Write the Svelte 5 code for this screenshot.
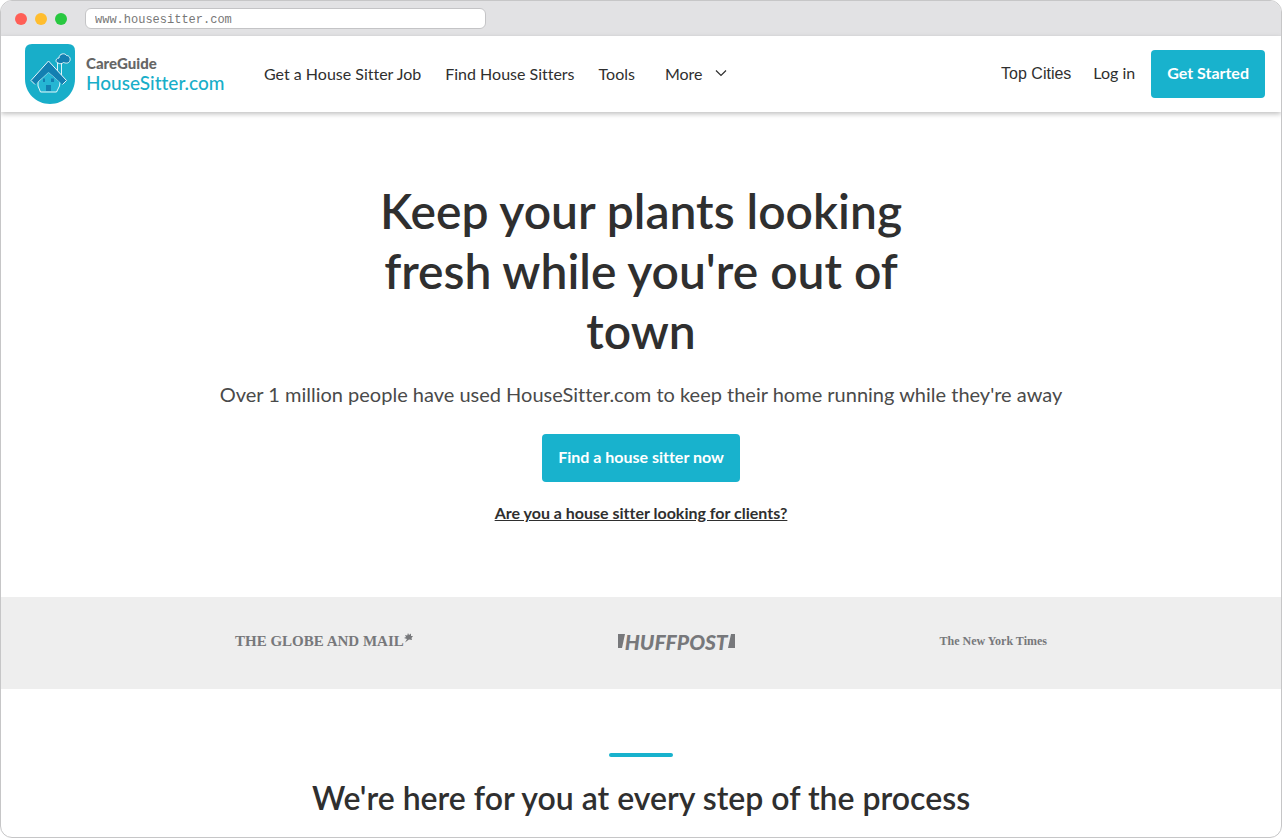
<script>
  const navLinks = ['Get a House Sitter Job', 'Find House Sitters', 'Tools'];

  let address = 'www.housesitter.com';
</script>

<div class="window">
  <div class="chrome">
    <span class="dot red"></span>
    <span class="dot yellow"></span>
    <span class="dot green"></span>
    <input class="address" type="text" aria-label="Address" bind:value={address} />
  </div>

  <header>
    <a class="brand" href="/">
      <svg width="50" height="60" viewBox="0 0 50 60" aria-hidden="true">
        <path d="M7 0H43Q50 0 50 7V35C50 49 39 60 25 60S0 49 0 35V7Q0 0 7 0Z" fill="#18aec9" />
        <path d="M32.5 18V27M36.5 18V31" stroke="#d9f3f8" stroke-width="1" />
        <path d="M33 19C30 18.5 30.5 14 34 14C34 9.500 40 8.5 41.5 11.5C45 11.5 46 15.5 44.5 17.5C43 20 40 19 38.5 18.5C37 20 34.5 20 33 19Z" fill="#137fb1" stroke="#e4f6fa" stroke-width="1" />
        <path d="M13 38L23.5 28L35 38L34.5 42L31.5 48H15.5L13 42Z" fill="#25b5d3" stroke="#e4f6fa" stroke-width="1" stroke-linejoin="round" />
        <path d="M23.5 17L41.5 36.5L37.5 40.5L23.5 28L10 40.5L6 36.5Z" fill="#137fb1" />
        <path d="M10 40.5L6 36.5L23.5 17L41.5 36.5L37.5 40.5" fill="none" stroke="#e4f6fa" stroke-width="1" stroke-linejoin="round" />
        <path d="M21 41H26V47H21Z" fill="#137fb1" />
        <path d="M18 34.5H20V38H18ZM26 34.5H29V38H26Z" fill="#137fb1" />
      </svg>
      <span class="brand-text">
        <span class="parent">CareGuide</span>
        <span class="site">HouseSitter.com</span>
      </span>
    </a>

    <nav>
      {#each navLinks as link}
        <a href="/">{link}</a>
      {/each}
      <button class="more" type="button">
        More
        <svg width="12" height="8" viewBox="0 0 12 8" aria-hidden="true">
          <path d="M1 1.5L6 6.5L11 1.5" fill="none" stroke="#2f2f2f" stroke-width="1.2" />
        </svg>
      </button>
    </nav>

    <div class="account">
      <a class="cities" href="/">Top Cities</a>
      <a class="login" href="/">Log in</a>
      <a class="button" href="/">Get Started</a>
    </div>
  </header>

  <main>
    <section class="hero">
      <h1>Keep your plants looking fresh while you're out of town</h1>
      <p>Over 1 million people have used HouseSitter.com to keep their home running while they're away</p>
      <a class="button" href="/">Find a house sitter now</a>
      <a class="clients" href="/">Are you a house sitter looking for clients?</a>
    </section>

    <section class="press">
      <div class="globe">
        THE GLOBE AND MAIL
        <svg width="9" height="10" viewBox="0 0 9 10" aria-hidden="true">
          <path d="M4 0L5 2L7 0.5L7 3L9 3L7.5 5L8 7L5 6.5L1 9.5L3 6L0 5L2 4L1 2L3.2 2.6Z" fill="#77787b" />
        </svg>
      </div>
      <div class="huff">
        <svg width="7" height="14" viewBox="0 0 7 14" aria-hidden="true">
          <path d="M0 0H7L4 14H0Z" fill="#77787b" />
        </svg>
        HUFFPOST
        <svg width="7" height="14" viewBox="0 0 7 14" aria-hidden="true">
          <path d="M3 0H7V14H0Z" fill="#77787b" />
        </svg>
      </div>
      <div class="times">The New York Times</div>
    </section>

    <section class="steps">
      <div class="rule"></div>
      <h2>We're here for you at every step of the process</h2>
    </section>
  </main>
</div>

<style>
  :global(body) {
    background: #fff;
  }

  .window {
    box-sizing: border-box;
    min-height: 100vh;
    border: 1px solid #c6c6c7;
    border-radius: 12px;
    overflow: hidden;
    background: #fff;
    color: #2f2f2f;
    font-family: Lato, 'Liberation Sans', sans-serif;
    font-variant-ligatures: none;
  }

  a {
    color: inherit;
    text-decoration: none;
  }

  .chrome {
    display: flex;
    align-items: center;
    gap: 8px;
    height: 35px;
    padding-left: 14px;
    background: #e2e2e4;
  }

  .dot {
    width: 12px;
    height: 12px;
    border-radius: 50%;
  }

  .red { background: #ff5f57; }
  .yellow { background: #ffbd2e; }
  .green { background: #28c840; }

  .address {
    box-sizing: border-box;
    width: 401px;
    height: 21px;
    margin-left: 10px;
    padding: 2px 9px 0;
    border: 1px solid #c4c4c6;
    border-radius: 6px;
    background: #fff;
    color: #777;
    font: 12px 'Liberation Mono', monospace;
  }

  header {
    display: flex;
    align-items: center;
    height: 76px;
    padding: 0 16px 0 24px;
    box-shadow: 0 2px 5px rgba(0, 0, 0, 0.25);
  }

  .brand {
    display: flex;
    align-items: center;
    gap: 11px;
    width: 239px;
  }

  .brand-text {
    display: flex;
    flex-direction: column;
  }

  .parent {
    color: #666;
    font-size: 15px;
    font-weight: 900;
    line-height: 18px;
  }

  .site {
    color: #18aec9;
    font-size: 19px;
    font-weight: 500;
    line-height: 22px;
  }

  nav {
    display: flex;
    gap: 24px;
    padding-bottom: 2px;
    font-size: 16px;
  }

  .more {
    display: flex;
    align-items: center;
    gap: 12px;
    padding: 0 0 0 6px;
    border: 0;
    background: none;
    color: inherit;
    font: inherit;
    cursor: pointer;
  }

  .account {
    display: flex;
    align-items: baseline;
    margin-left: auto;
    font-size: 16px;
  }

  .cities {
    margin-right: 22px;
    font-family: 'Liberation Sans', Arial, sans-serif;
  }

  .login {
    margin-right: 16px;
  }

  .button {
    box-sizing: border-box;
    height: 48px;
    padding: 0 16px;
    border-radius: 4px;
    background: #18b2cd;
    color: #fff;
    font-size: 16px;
    font-weight: 700;
    line-height: 45px;
  }

  .hero {
    display: flex;
    flex-direction: column;
    align-items: center;
    padding: 69px 24px 72px;
    text-align: center;
  }

  h1 {
    max-width: 600px;
    margin: 0;
    font-size: 48px;
    font-weight: 600;
    line-height: 60px;
  }

  .hero p {
    margin: 18px 0 25px;
    color: #4a4a4a;
    font-size: 20px;
    line-height: 30px;
  }

  .clients {
    margin-top: 19px;
    font-size: 16px;
    font-weight: 700;
    line-height: 24px;
    text-decoration: underline;
  }

  .press {
    display: flex;
    align-items: center;
    justify-content: space-between;
    box-sizing: border-box;
    height: 92px;
    padding: 0 234px 4px;
    background: #eee;
    color: #77787b;
  }

  .globe,
  .huff {
    display: flex;
    align-items: center;
  }

  .globe {
    font: bold 15px 'Liberation Serif', serif;
  }

  .globe svg {
    align-self: flex-start;
  }

  .huff {
    font: italic 900 21px Lato, sans-serif;
  }

  .times {
    font: bold 12px 'Liberation Serif', serif;
  }

  .steps {
    padding: 64px 24px 16px;
    text-align: center;
  }

  .rule {
    width: 64px;
    height: 4px;
    margin: 0 auto 20px;
    border-radius: 2px;
    background: #18b2cd;
  }

  h2 {
    margin: 0;
    font-size: 32px;
    font-weight: 600;
    line-height: 42px;
  }
</style>
